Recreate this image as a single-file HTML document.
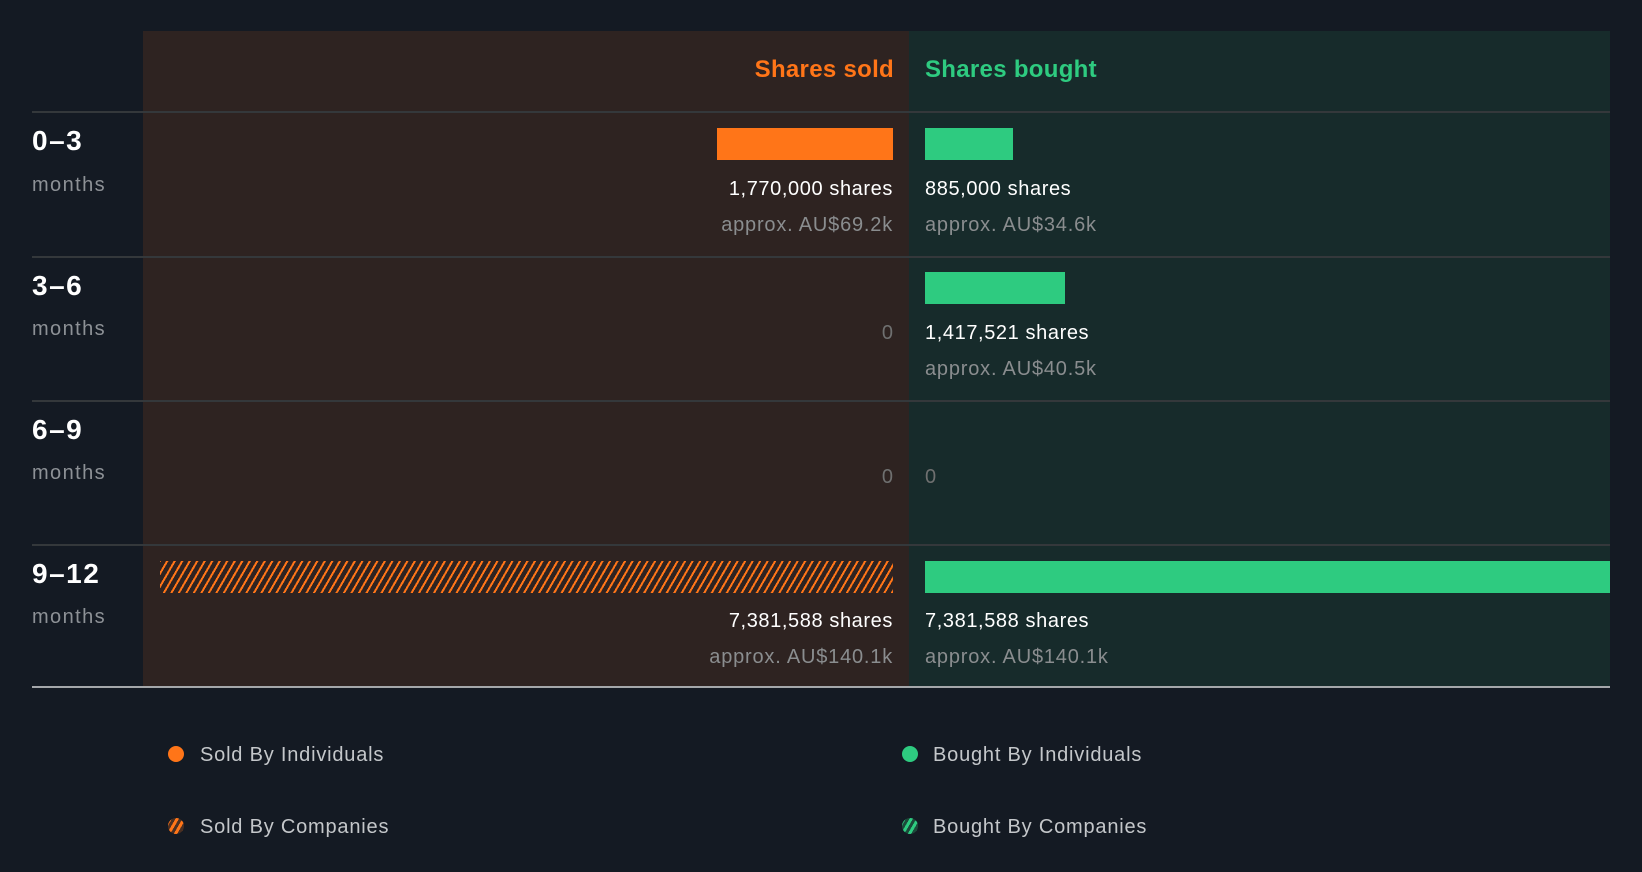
<!DOCTYPE html>
<html><head><meta charset="utf-8"><style>
*{margin:0;padding:0;box-sizing:border-box}
body{width:1642px;height:872px;background:#141a23;position:relative;overflow:hidden;font-family:"Liberation Sans",Arial,sans-serif}
.a{position:absolute}
.sold{left:143px;top:31px;width:766px;height:656px;background:#2e2321}
.bought{left:909px;top:31px;width:701px;height:656px;background:#172b2b}
.hl{left:32px;width:1578px;height:2px;background:#34383b}
.lab{left:32px;font-weight:bold;font-size:28px;color:#fff;line-height:30px;letter-spacing:1.5px}
.mon{left:32px;font-size:20px;color:#8d9196;line-height:22px;letter-spacing:1.4px}
.r{text-align:right;width:600px;left:293px}
.l{left:925px}
.sh{font-size:20px;color:#fff;line-height:22px;white-space:nowrap;letter-spacing:0.6px}
.ap{font-size:20px;color:#8a8d8f;line-height:22px;white-space:nowrap;letter-spacing:0.8px}
.r.sh,.r.ap{margin-right:-1px}
.z{font-size:20px;color:#6f7070;line-height:22px}
.bar{height:32px}
.o{background:#ff7518}
.g{background:#2ecb80}
.leg{font-size:20px;color:#c4c7ca;line-height:24px;white-space:nowrap;letter-spacing:0.8px}
.dot{width:16px;height:16px;border-radius:50%}
</style></head><body>
<div class="a sold"></div>
<div class="a bought"></div>
<div class="a" style="left:0;width:894px;text-align:right;top:56px;font-size:24px;font-weight:bold;color:#ff7518;line-height:28px;letter-spacing:0.3px">Shares sold</div>
<div class="a" style="left:925px;top:56px;font-size:24px;font-weight:bold;color:#2ecb80;line-height:28px;letter-spacing:0.3px">Shares bought</div>

<div class="a hl" style="top:111px"></div>
<div class="a hl" style="top:256px"></div>
<div class="a hl" style="top:400px"></div>
<div class="a hl" style="top:544px"></div>
<div class="a" style="left:32px;width:1578px;height:2px;top:686px;background:#a4a7aa"></div>

<!-- row 0-3 -->
<div class="a lab" style="top:126px">0–3</div>
<div class="a mon" style="top:174px">months</div>
<div class="a bar o" style="left:717px;width:176px;top:128px"></div>
<div class="a bar g" style="left:925px;width:88px;top:128px"></div>
<div class="a sh r" style="top:178px">1,770,000 shares</div>
<div class="a ap r" style="top:214px">approx. AU$69.2k</div>
<div class="a sh l" style="top:178px">885,000 shares</div>
<div class="a ap l" style="top:214px">approx. AU$34.6k</div>

<!-- row 3-6 -->
<div class="a lab" style="top:271px">3–6</div>
<div class="a mon" style="top:318px">months</div>
<div class="a z r" style="top:322px">0</div>
<div class="a bar g" style="left:925px;width:140px;top:272px"></div>
<div class="a sh l" style="top:322px">1,417,521 shares</div>
<div class="a ap l" style="top:358px">approx. AU$40.5k</div>

<!-- row 6-9 -->
<div class="a lab" style="top:415px">6–9</div>
<div class="a mon" style="top:462px">months</div>
<div class="a z r" style="top:466px">0</div>
<div class="a z l" style="top:466px">0</div>

<!-- row 9-12 -->
<div class="a lab" style="top:559px">9–12</div>
<div class="a mon" style="top:606px">months</div>
<div class="a bar" style="left:160px;width:733px;top:561px;background:repeating-linear-gradient(-60deg,#ff7518 0 2px,#2e2321 2px 6.5px)"></div>
<div class="a bar g" style="left:925px;width:685px;top:561px"></div>
<div class="a sh r" style="top:610px">7,381,588 shares</div>
<div class="a ap r" style="top:646px">approx. AU$140.1k</div>
<div class="a sh l" style="top:610px">7,381,588 shares</div>
<div class="a ap l" style="top:646px">approx. AU$140.1k</div>

<!-- legend -->
<div class="a dot" style="left:168px;top:746px;background:#ff7518"></div>
<div class="a leg" style="left:200px;top:743px">Sold By Individuals</div>
<div class="a dot" style="left:168px;top:818px;background:repeating-linear-gradient(-60deg,#ff7518 0 3px,#4a2f22 3px 6px)"></div>
<div class="a leg" style="left:200px;top:815px">Sold By Companies</div>
<div class="a dot" style="left:902px;top:746px;background:#2ecb80"></div>
<div class="a leg" style="left:933px;top:743px">Bought By Individuals</div>
<div class="a dot" style="left:902px;top:818px;background:repeating-linear-gradient(-60deg,#2ecb80 0 3px,#1c4a3a 3px 6px)"></div>
<div class="a leg" style="left:933px;top:815px">Bought By Companies</div>
</body></html>
